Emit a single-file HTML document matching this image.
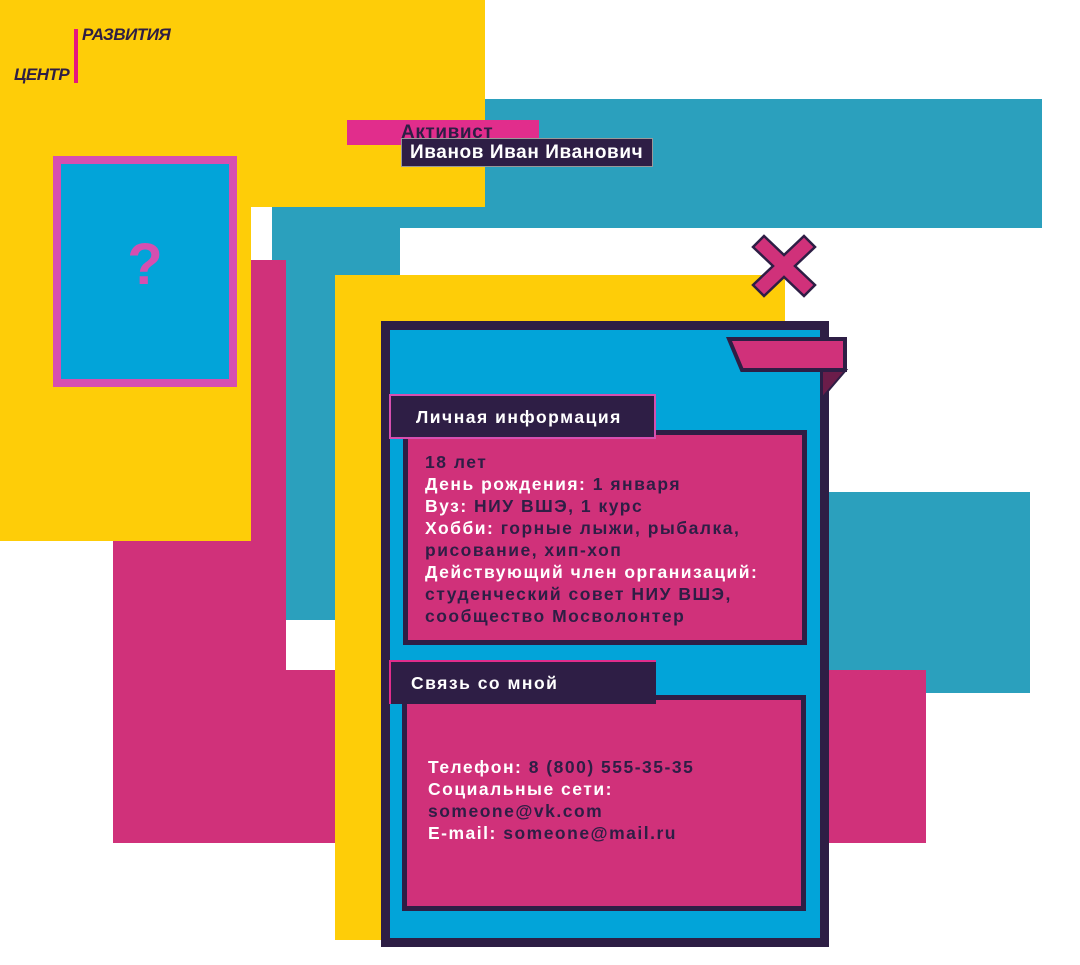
<!DOCTYPE html>
<html><head><meta charset="utf-8"><style>
html,body{margin:0;padding:0;background:#fff;width:1080px;height:965px;overflow:hidden;position:relative;font-family:"Liberation Sans",sans-serif}
div{position:absolute;box-sizing:border-box}
.t{background:#2ba0bd}
.y{background:#fecd08}
.m{background:#d0317a}
.dk{background:#2e1e45}
.txt{font-weight:bold;font-size:17.5px;letter-spacing:1.5px;color:#2e1e45;line-height:22px;white-space:nowrap}
.w{color:#fff}
</style></head><body>
<div class="t" style="left:272px;top:99px;width:770px;height:129px"></div>
<div class="t" style="left:272px;top:228px;width:128px;height:392px"></div>
<div class="t" style="left:826px;top:492px;width:204px;height:201px"></div>
<div class="y" style="left:0;top:0;width:485px;height:207px"></div>
<div class="y" style="left:0;top:207px;width:251px;height:334px"></div>
<div class="m" style="left:251px;top:260px;width:35px;height:420px"></div>
<div class="m" style="left:113px;top:541px;width:173px;height:302px"></div>
<div class="m" style="left:286px;top:670px;width:640px;height:173px"></div>
<div class="y" style="left:335px;top:275px;width:450px;height:665px"></div>
<svg style="position:absolute;left:750px;top:233px" width="68" height="66" viewBox="0 0 68 66"><path d="M3 14 L14 3 L34 22 L54 3 L65 14 L45 33 L65 52 L54 63 L34 44 L14 63 L3 52 L23 33 Z" fill="#d0317a" stroke="#2e1e45" stroke-width="2.5" stroke-linejoin="miter"/></svg>
<div style="left:381px;top:321px;width:448px;height:626px;background:#02a4d9;border:9px solid #2e1e45"></div>
<svg style="position:absolute;left:726px;top:336px" width="124" height="66" viewBox="0 0 124 66"><path d="M96 34 L120 34 L96 62 Z" fill="#6b1d4a" stroke="#2e1e45" stroke-width="2"/><path d="M3 3 L119 3 L119 34 L16 34 Z" fill="#d0317a" stroke="#2e1e45" stroke-width="4"/></svg>
<div class="m" style="left:403px;top:430px;width:404px;height:215px;border:5px solid #2e1e45"></div>
<div class="dk" style="left:389px;top:394px;width:267px;height:45px;border:2px solid #d64fb0"></div>
<div class="txt w" style="left:416px;top:406px">Личная информация</div>
<div class="txt" style="left:425px;top:451px">18 лет<br><span class="w">День рождения:</span> 1 января<br><span class="w">Вуз:</span> НИУ ВШЭ, 1 курс<br><span class="w">Хобби:</span> горные лыжи, рыбалка,<br>рисование, хип-хоп<br><span class="w">Действующий член организаций:</span><br>студенческий совет НИУ ВШЭ,<br>сообщество Мосволонтер</div>
<div class="m" style="left:402px;top:695px;width:404px;height:216px;border:5px solid #2e1e45"></div>
<div class="dk" style="left:389px;top:660px;width:267px;height:44px;border-left:2px solid #e12d8c;border-top:2px solid #e12d8c"></div>
<div class="txt w" style="left:411px;top:672px">Связь со мной</div>
<div class="txt" style="left:428px;top:756px"><span class="w">Телефон:</span> 8 (800) 555-35-35<br><span class="w">Социальные сети:</span><br>someone@vk.com<br><span class="w">E-mail:</span> someone@mail.ru</div>
<div style="left:53px;top:156px;width:184px;height:231px;background:#02a4d9;border:8px solid #d64fb0"></div>
<div style="left:115px;top:232px;width:60px;text-align:center;font-weight:bold;font-size:58px;color:#d64fb0;line-height:66px">?</div>
<div style="left:74px;top:29px;width:4px;height:54px;background:#e6177f"></div>
<div style="left:82px;top:25px;font-weight:bold;font-style:italic;font-size:17px;color:#2e1e45;letter-spacing:-0.5px">РАЗВИТИЯ</div>
<div style="left:14px;top:65px;font-weight:bold;font-style:italic;font-size:17px;color:#2e1e45;letter-spacing:-0.5px">ЦЕНТР</div>
<div style="left:347px;top:120px;width:192px;height:25px;background:#e12d8c"></div>
<div class="dk" style="left:401px;top:138px;width:252px;height:29px;border:1px solid #999"></div>
<div class="txt" style="left:401px;top:122px;letter-spacing:0.6px;font-size:19px">Активист</div>
<div class="txt w" style="left:410px;top:142px;letter-spacing:0.6px;font-size:19px">Иванов Иван Иванович</div>
</body></html>
